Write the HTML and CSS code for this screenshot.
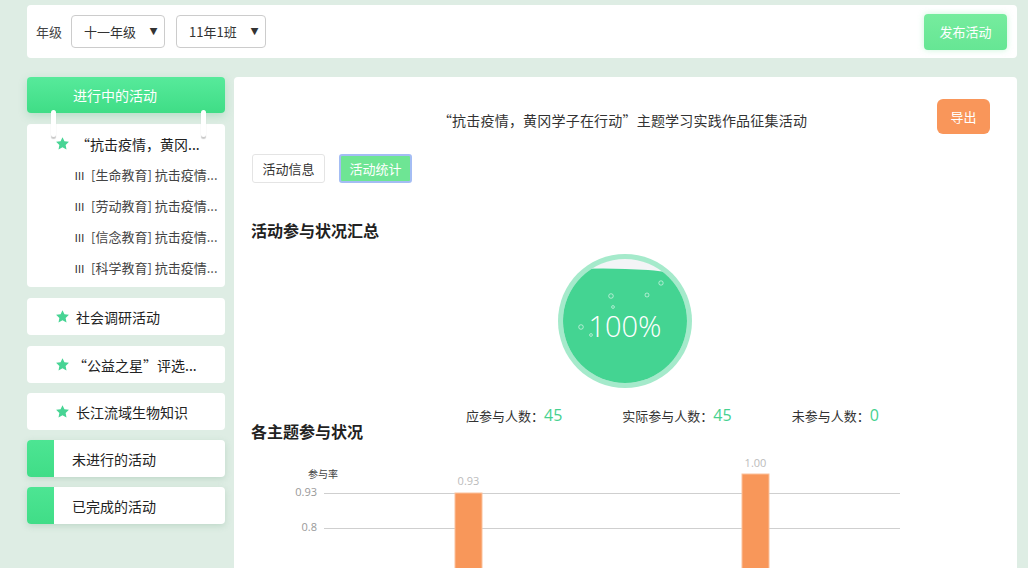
FILE: index.html
```html
<!DOCTYPE html>
<html lang="zh">
<head>
<meta charset="utf-8">
<link rel="stylesheet" href="styles.css">
</head>
<body>
<div class="topbar">
  <span class="lbl">年级</span>
  <div class="sel sel-grade"><span>十一年级</span><span class="caret">▼</span></div>
  <div class="sel sel-class"><span>11年1班</span><span class="caret">▼</span></div>
  <div class="spacer"></div>
  <button class="publish">发布活动</button>
</div>

<div class="layout">
  <aside class="side">
    <div class="side-head">进行中的活动
      <span class="pin pin-l"></span><span class="pin pin-r"></span>
    </div>
    <div class="card list-card">
      <div class="act"><svg class="star" viewBox="0 0 24 24"><path d="M12 1.8l3.1 6.6 7.2.9-5.3 5 1.4 7.1L12 17.9l-6.4 3.5 1.4-7.1-5.3-5 7.2-.9z"/></svg><span class="act-t">“抗击疫情，黄冈...</span></div>
      <div class="sub"><span class="rn">Ⅲ</span>[生命教育] 抗击疫情...</div>
      <div class="sub"><span class="rn">Ⅲ</span>[劳动教育] 抗击疫情...</div>
      <div class="sub"><span class="rn">Ⅲ</span>[信念教育] 抗击疫情...</div>
      <div class="sub"><span class="rn">Ⅲ</span>[科学教育] 抗击疫情...</div>
    </div>
    <div class="card one"><svg class="star" viewBox="0 0 24 24"><path d="M12 1.8l3.1 6.6 7.2.9-5.3 5 1.4 7.1L12 17.9l-6.4 3.5 1.4-7.1-5.3-5 7.2-.9z"/></svg><span>社会调研活动</span></div>
    <div class="card one"><svg class="star" viewBox="0 0 24 24"><path d="M12 1.8l3.1 6.6 7.2.9-5.3 5 1.4 7.1L12 17.9l-6.4 3.5 1.4-7.1-5.3-5 7.2-.9z"/></svg><span class="q">“公益之星”评选...</span></div>
    <div class="card one"><svg class="star" viewBox="0 0 24 24"><path d="M12 1.8l3.1 6.6 7.2.9-5.3 5 1.4 7.1L12 17.9l-6.4 3.5 1.4-7.1-5.3-5 7.2-.9z"/></svg><span>长江流域生物知识</span></div>
    <div class="card group"><span class="strip"></span><span>未进行的活动</span></div>
    <div class="card group"><span class="strip"></span><span>已完成的活动</span></div>
  </aside>

  <main class="panel">
    <div class="head-row">
      <div></div>
      <div class="title">“抗击疫情，黄冈学子在行动”主题学习实践作品征集活动</div>
      <div class="exp-wrap"><button class="export">导出</button></div>
    </div>
    <div class="tabs">
      <button class="tab">活动信息</button>
      <button class="tab on">活动统计</button>
    </div>
    <h3 class="h1">活动参与状况汇总</h3>
    <div class="ball-wrap">
      <div class="ball">
        <svg width="134" height="134" viewBox="0 0 134 134">
          <defs><clipPath id="c"><circle cx="67" cy="67" r="62"/></clipPath></defs>
          <circle cx="67" cy="67" r="67" fill="#a5eacb"/>
          <circle cx="67" cy="67" r="62" fill="#f3f4f6"/>
          <g clip-path="url(#c)">
            <path d="M0 16 C30 14 60 14 90 16 C110 18 125 20 134 22 L134 134 L0 134Z" fill="#44d492"/>
          </g>
          <g fill="none" stroke="rgba(255,255,255,0.55)" stroke-width="1">
            <circle cx="53" cy="42" r="2.3"/>
            <circle cx="89" cy="41" r="2"/>
            <circle cx="55" cy="53" r="1.4"/>
            <circle cx="23" cy="73" r="2.3"/>
            <circle cx="33" cy="81" r="1.4"/>
            <circle cx="103" cy="29" r="2.2"/>
          </g>
        </svg>
        <span class="pct">100%</span>
      </div>
    </div>
    <div class="stats">
      <div class="stat">应参与人数：<b>45</b></div>
      <div class="stat">实际参与人数：<b>45</b></div>
      <div class="stat">未参与人数：<b>0</b></div>
    </div>
    <h3 class="h2">各主题参与状况</h3>
    <svg class="chart" width="700" height="130" viewBox="0 0 700 130">
      <text x="57" y="36" class="ax-name">参与率</text>
      <text x="66" y="54" class="ax" text-anchor="end">0.93</text>
      <text x="66" y="89" class="ax" text-anchor="end">0.8</text>
      <line x1="73" y1="51.5" x2="649" y2="51.5" stroke="#cfcfcf"/>
      <line x1="73" y1="86.5" x2="649" y2="86.5" stroke="#cfcfcf"/>
      <rect x="204" y="51" width="27" height="90" fill="#f8975a" stroke="#fbc19c" stroke-width="1"/>
      <text x="217.5" y="43" class="bl" text-anchor="middle">0.93</text>
      <rect x="491" y="32" width="27" height="110" fill="#f8975a" stroke="#fbc19c" stroke-width="1"/>
      <text x="504.5" y="25" class="bl" text-anchor="middle">1.00</text>
    </svg>
  </main>
</div>
</body>
</html>
```
FILE: styles.css
```css
* { box-sizing: border-box; }
html, body { margin: 0; height: 100%; overflow: hidden; }
body {
  background: #deede4;
  font-family: "Noto Sans CJK SC", "Microsoft YaHei", sans-serif;
  color: #333;
  font-size: 13px;
}
button { font-family: inherit; cursor: pointer; }

.topbar {
  margin: 5px 11px 0 27px;
  height: 53px;
  background: #fff;
  border-radius: 4px;
  display: flex;
  align-items: center;
  padding: 0 10px 0 9px;
}
.lbl { margin-right: 9px; color: #444; }
.sel {
  height: 33px;
  border: 1px solid #ccc;
  border-radius: 4px;
  display: flex;
  align-items: center;
  justify-content: space-between;
  padding: 0 6px 0 12px;
  color: #333;
}
.sel-grade { width: 94px; margin-right: 11px; }
.sel-class { width: 90px; }
.caret { font-size: 9px; color: #333; transform: scaleX(0.9); }
.spacer { flex: 1; }
.publish {
  width: 83px; height: 36px;
  border: 0; border-radius: 4px;
  background: linear-gradient(#76ec9e, #66e694);
  color: #fff; font-size: 13px;
  box-shadow: 0 0 6px rgba(102, 230, 148, 0.35);
}

.layout {
  display: flex;
  gap: 9px;
  margin: 19px 11px 0 27px;
  align-items: flex-start;
}
.side { width: 198px; display: flex; flex-direction: column; gap: 11px; }
.side-head {
  position: relative;
  height: 36px;
  border-radius: 4px;
  background: linear-gradient(#57ea9b, #3fdd86);
  color: #fff;
  font-size: 14px;
  display: flex; align-items: center; justify-content: center;
  padding-right: 22px;
  box-shadow: 0 3px 8px rgba(60, 180, 110, 0.25);
}
.pin {
  position: absolute;
  top: 33px;
  width: 5px; height: 27px;
  background: #fff;
  border-radius: 3px;
  box-shadow: 0 2px 1px #c9c9c9;
  z-index: 2;
}
.pin-l { left: 24px; }
.pin-r { left: 174px; }
.card {
  background: #fff;
  border-radius: 4px;
}
.list-card { padding: 9px 0 4px; }
.act {
  display: flex; align-items: center;
  height: 21px;
  padding-left: 28px;
  color: #222;
  font-size: 14px;
}
.star { width: 15px; height: 15px; fill: #47d494; flex: none; }
.act-t { margin-left: 6px; }
.sub {
  height: 31px;
  display: flex; align-items: center;
  padding-left: 47px;
  color: #444;
  font-size: 13px;
}
.act + .sub { margin-top: 5px; }
.rn { margin-right: 6px; font-size: 11px; color: #333; }
.one {
  height: 37px;
  display: flex; align-items: center;
  padding-left: 28px;
  color: #222;
  font-size: 14px;
}
.one span { margin-left: 6px; }
.one .q { margin-left: 3px; }
.one:nth-of-type(5) { margin-top: -1px; }
.group {
  height: 37px;
  display: flex; align-items: center;
  overflow: hidden;
  color: #222;
  font-size: 14px;
  box-shadow: 0 2px 6px rgba(120, 170, 140, 0.3);
  margin-top: -1px;
}
.strip { width: 27px; align-self: stretch; background: linear-gradient(#4de593, #40dd87); margin-right: 18px; }

.panel {
  flex: 1;
  background: #fff;
  border-radius: 4px;
  height: 510px;
  overflow: hidden;
  padding: 22px 27px 0 17px;
}
.head-row {
  display: grid;
  grid-template-columns: 1fr auto 1fr;
  align-items: center;
  height: 35px;
}
.title { color: #333; font-size: 14px; padding-left: 4px; padding-top: 6px; letter-spacing: 0.2px; }
.exp-wrap { display: flex; justify-content: flex-end; }
.export {
  width: 53px; height: 35px;
  border: 0; border-radius: 6px;
  background: #f9965a;
  color: #fff; font-size: 13px;
}
.tabs { display: flex; gap: 14px; margin-top: 20px; padding-left: 1px; }
.tab {
  height: 29px; width: 73px;
  background: #fff;
  border: 1px solid #e4e4e4;
  border-radius: 3px;
  color: #333;
  font-size: 13px;
  padding: 0;
}
.tab.on {
  background: #6ee594;
  color: #fff;
  border: 2px solid #a4bdf4;
}
.h1, .h2 {
  margin: 0;
  font-size: 16px;
  font-weight: bold;
  line-height: 22px;
  color: #222;
}
.h1 { margin-top: 36px; }
.ball-wrap { display: flex; justify-content: center; margin-top: 13px; padding-left: 9px; }
.ball { position: relative; width: 134px; height: 134px; }
.ball svg { display: block; }
.pct {
  position: absolute;
  left: 0; right: 0; top: 55px;
  text-align: center;
  color: #fff;
  font-family: "Open Sans", "Noto Sans", sans-serif;
  font-weight: 300;
  font-size: 29px;
  line-height: 34px;
}
.stats {
  display: flex;
  gap: 60px;
  margin: 17px 0 0 215px;
  height: 20px;
  align-items: center;
}
.stat { color: #333; font-size: 13px; display: flex; align-items: center; }
.stat b { font-weight: normal; color: #46d18f; font-size: 16px; font-family: "Open Sans", "Noto Sans", sans-serif; }
.h2 { margin-top: -5px; }
.chart { display: block; margin-top: 0; }
.ax-name { font-size: 10px; fill: #444; }
.ax { font-size: 11px; fill: #999; font-family: "Open Sans", sans-serif; }
.bl { font-size: 11px; fill: #bbb; font-family: "Open Sans", sans-serif; }
```
